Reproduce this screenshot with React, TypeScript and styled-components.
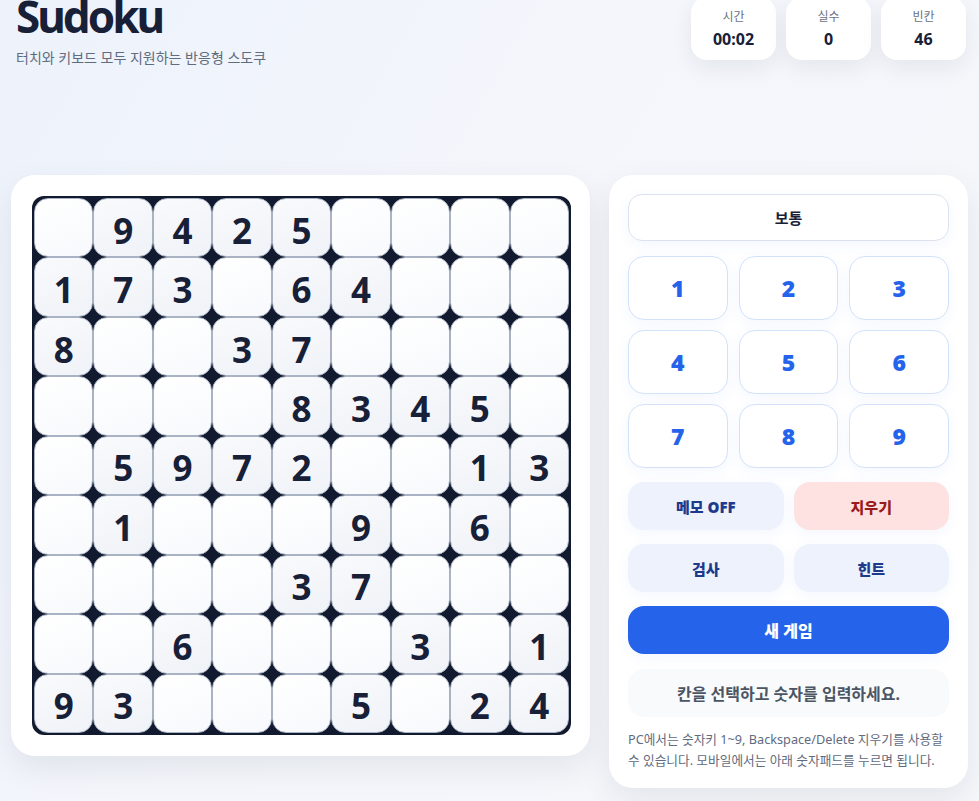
import styled, { createGlobalStyle } from "styled-components";

const GlobalStyle = createGlobalStyle`
  * { box-sizing: border-box; }
  body {
    margin: 0;
    background: linear-gradient(120deg, #edf2fb 0%, #f4f6fb 45%, #f6f7fb 100%);
    font-family: "Noto Sans", "Noto Sans CJK KR", sans-serif;
    color: #172036;
    min-height: 801px;
  }
`;

const Page = styled.div`
  padding: 0 11px 20px;
  overflow: hidden;
`;

const Header = styled.header`
  display: flex;
  justify-content: space-between;
  align-items: flex-start;
  height: 178px;
  margin-top: -3px;
`;

const TitleBlock = styled.div`
  padding-left: 5px;
`;

const Title = styled.h1`
  margin: -3px 0 0;
  font-size: 44px;
  line-height: 1;
  font-weight: 700;
  letter-spacing: -3px;
  color: #172036;
`;

const Subtitle = styled.p`
  margin: 9px 0 0;
  font-size: 14px;
  color: #5f6b7e;
`;

const Stats = styled.div`
  display: flex;
  gap: 10px;
  padding-right: 2px;
`;

const StatCard = styled.div`
  width: 85px;
  height: 63px;
  background: #fff;
  border-radius: 16px;
  box-shadow: 0 8px 22px rgba(15, 23, 42, 0.07);
  display: flex;
  flex-direction: column;
  align-items: center;
  justify-content: center;
  padding-top: 2px;
`;

const StatLabel = styled.span`
  font-size: 12px;
  color: #6b7280;
  line-height: 16px;
`;

const StatValue = styled.span`
  font-size: 16px;
  font-weight: 700;
  color: #172036;
  line-height: 22px;
  margin-top: 3px;
`;

const Main = styled.main`
  display: flex;
  gap: 19px;
  align-items: flex-start;
`;

const Card = styled.section`
  background: #fff;
  border-radius: 24px;
  box-shadow: 0 12px 32px rgba(15, 23, 42, 0.08);
`;

const BoardCard = styled(Card)`
  width: 579px;
  padding: 21px;
`;

const Grid = styled.div`
  width: 539px;
  height: 539px;
  background: #111a2e;
  border: 2px solid #111a2e;
  border-radius: 12px;
  display: grid;
  grid-template-columns: repeat(9, 1fr);
  grid-template-rows: repeat(9, 1fr);
  overflow: hidden;
`;

const Cell = styled.div<{ $given: boolean }>`
  background: ${(p) =>
    p.$given
      ? "linear-gradient(160deg, #f9fafc 0%, #eff2f7 100%)"
      : "linear-gradient(160deg, #ffffff 0%, #f7f9fc 100%)"};
  border: 1px solid #aab3c3;
  border-radius: 14px;
  display: flex;
  align-items: center;
  justify-content: center;
  padding-top: 5px;
  font-size: 35px;
  font-weight: 700;
  color: #172036;
`;

const Panel = styled(Card)`
  width: 359px;
  padding: 19px 19px 17px;
  display: flex;
  flex-direction: column;
`;

const Select = styled.div`
  height: 47px;
  border: 1px solid #dbe2ee;
  border-radius: 14px;
  display: flex;
  align-items: center;
  justify-content: center;
  font-size: 15px;
  font-weight: 700;
  color: #172036;
  box-shadow: 0 4px 14px rgba(37, 99, 235, 0.05);
`;

const NumPad = styled.div`
  margin-top: 15px;
  display: grid;
  grid-template-columns: repeat(3, 1fr);
  gap: 10px 11px;
`;

const NumKey = styled.button`
  height: 64px;
  border: 1px solid #d3e2fb;
  border-radius: 16px;
  background: #fff;
  color: #2563eb;
  font-family: inherit;
  font-size: 23px;
  font-weight: 900;
  box-shadow: 0 4px 14px rgba(37, 99, 235, 0.05);
`;

const ButtonRow = styled.div`
  display: grid;
  grid-template-columns: 1fr 1fr;
  gap: 10px;
  margin-top: 14px;
`;

const tones = {
  soft: { bg: "#edf2fd", fg: "#1e3a8a" },
  danger: { bg: "#fee2e2", fg: "#991b1b" },
  primary: { bg: "#2563eb", fg: "#ffffff" },
};

const ActionButton = styled.button<{ $tone: keyof typeof tones }>`
  height: 48px;
  border: none;
  border-radius: 16px;
  background: ${(p) => tones[p.$tone].bg};
  color: ${(p) => tones[p.$tone].fg};
  font-family: inherit;
  font-size: 15px;
  font-weight: 900;
  box-shadow: 0 4px 14px rgba(37, 99, 235, 0.05);
`;

const NewGame = styled(ActionButton)`
  width: 100%;
  margin-top: 14px;
  font-size: 16px;
`;

const Status = styled.div`
  margin-top: 15px;
  height: 48px;
  border-radius: 16px;
  background: #f8fafc;
  color: #4b5563;
  font-size: 16px;
  font-weight: 700;
  display: flex;
  align-items: center;
  justify-content: center;
`;

const Help = styled.p`
  margin: 12px 0 0;
  font-size: 12.7px;
  line-height: 21px;
  color: #5f6b7e;
`;

const puzzle = [
  "094250000",
  "173064000",
  "800370000",
  "000083450",
  "059720013",
  "010009060",
  "000037000",
  "006000301",
  "930005024",
];

export default function App() {
  return (
    <Page>
      <GlobalStyle />
      <Header>
        <TitleBlock>
          <Title>Sudoku</Title>
          <Subtitle>터치와 키보드 모두 지원하는 반응형 스도쿠</Subtitle>
        </TitleBlock>
        <Stats>
          <StatCard>
            <StatLabel>시간</StatLabel>
            <StatValue>00:02</StatValue>
          </StatCard>
          <StatCard>
            <StatLabel>실수</StatLabel>
            <StatValue>0</StatValue>
          </StatCard>
          <StatCard>
            <StatLabel>빈칸</StatLabel>
            <StatValue>46</StatValue>
          </StatCard>
        </Stats>
      </Header>
      <Main>
        <BoardCard>
          <Grid>
            {puzzle.map((row, r) =>
              row.split("").map((d, c) => (
                <Cell key={`${r}-${c}`} $given={d !== "0"}>
                  {d !== "0" ? d : ""}
                </Cell>
              ))
            )}
          </Grid>
        </BoardCard>
        <Panel>
          <Select>보통</Select>
          <NumPad>
            {[1, 2, 3, 4, 5, 6, 7, 8, 9].map((n) => (
              <NumKey key={n}>{n}</NumKey>
            ))}
          </NumPad>
          <ButtonRow>
            <ActionButton $tone="soft">메모 OFF</ActionButton>
            <ActionButton $tone="danger">지우기</ActionButton>
          </ButtonRow>
          <ButtonRow>
            <ActionButton $tone="soft">검사</ActionButton>
            <ActionButton $tone="soft">힌트</ActionButton>
          </ButtonRow>
          <NewGame $tone="primary">새 게임</NewGame>
          <Status>칸을 선택하고 숫자를 입력하세요.</Status>
          <Help>
            PC에서는 숫자키 1~9, Backspace/Delete 지우기를 사용할 수 있습니다.
            모바일에서는 아래 숫자패드를 누르면 됩니다.
          </Help>
        </Panel>
      </Main>
    </Page>
  );
}
